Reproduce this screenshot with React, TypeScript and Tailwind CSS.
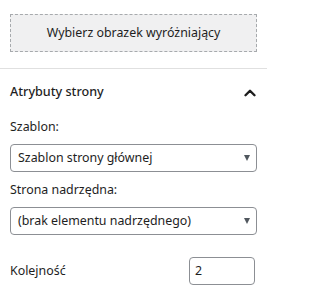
import { ChevronUp } from 'lucide-react';

const font = { fontFamily: '"Noto Sans", "Open Sans", Arial, sans-serif' };

function SelectBox({ value }: { value: string }) {
  return (
    <div className="h-[28px] border border-[#8c8f94] rounded-[4px] flex items-center justify-between pl-[7px] pr-[6px] bg-white">
      <span className="text-[12.4px] text-[#1e1e1e] leading-none">{value}</span>
      <span className="w-0 h-0 border-l-[3px] border-r-[3px] border-t-[6px] border-l-transparent border-r-transparent border-t-[#50575e]" />
    </div>
  );
}

export default function App() {
  return (
    <div className="w-[267px] h-[298px] bg-white overflow-hidden" style={font}>
      {/* Featured image */}
      <div className="px-[10px] pt-[14px] pb-[16px]">
        <button className="w-full h-[38px] bg-[#f0f0f1] border border-dashed border-[#a7aaad] text-[12.4px] text-[#1e1e1e] flex items-center justify-center">
          Wybierz obrazek wyróżniający
        </button>
      </div>

      <div className="h-px bg-[#e0e0e0]" />

      {/* Page attributes panel */}
      <div className="h-[47px] flex items-center justify-between pl-[10px] pr-[8px]">
        <span className="text-[12.6px] font-medium text-[#1e1e1e]">Atrybuty strony</span>
        <ChevronUp className="w-[18px] h-[18px] text-[#1e1e1e]" strokeWidth={3.2} />
      </div>

      <div className="px-[10px] pt-[1px] flex flex-col">
        <label className="text-[12.4px] text-[#1e1e1e] leading-[20px] mb-[7px]">Szablon:</label>
        <SelectBox value="Szablon strony głównej" />
        <label className="text-[12.4px] text-[#1e1e1e] leading-[20px] mt-[8px] mb-[7px]">Strona nadrzędna:</label>
        <SelectBox value="(brak elementu nadrzędnego)" />
        <div className="flex items-center justify-between mt-[22px] pr-[2px]">
          <span className="text-[12.4px] text-[#1e1e1e]">Kolejność</span>
          <div className="w-[66px] h-[28px] border border-[#8c8f94] rounded-[4px] flex items-center pl-[5px] text-[12.4px] text-[#1e1e1e]">
            2
          </div>
        </div>
      </div>
    </div>
  );
}
